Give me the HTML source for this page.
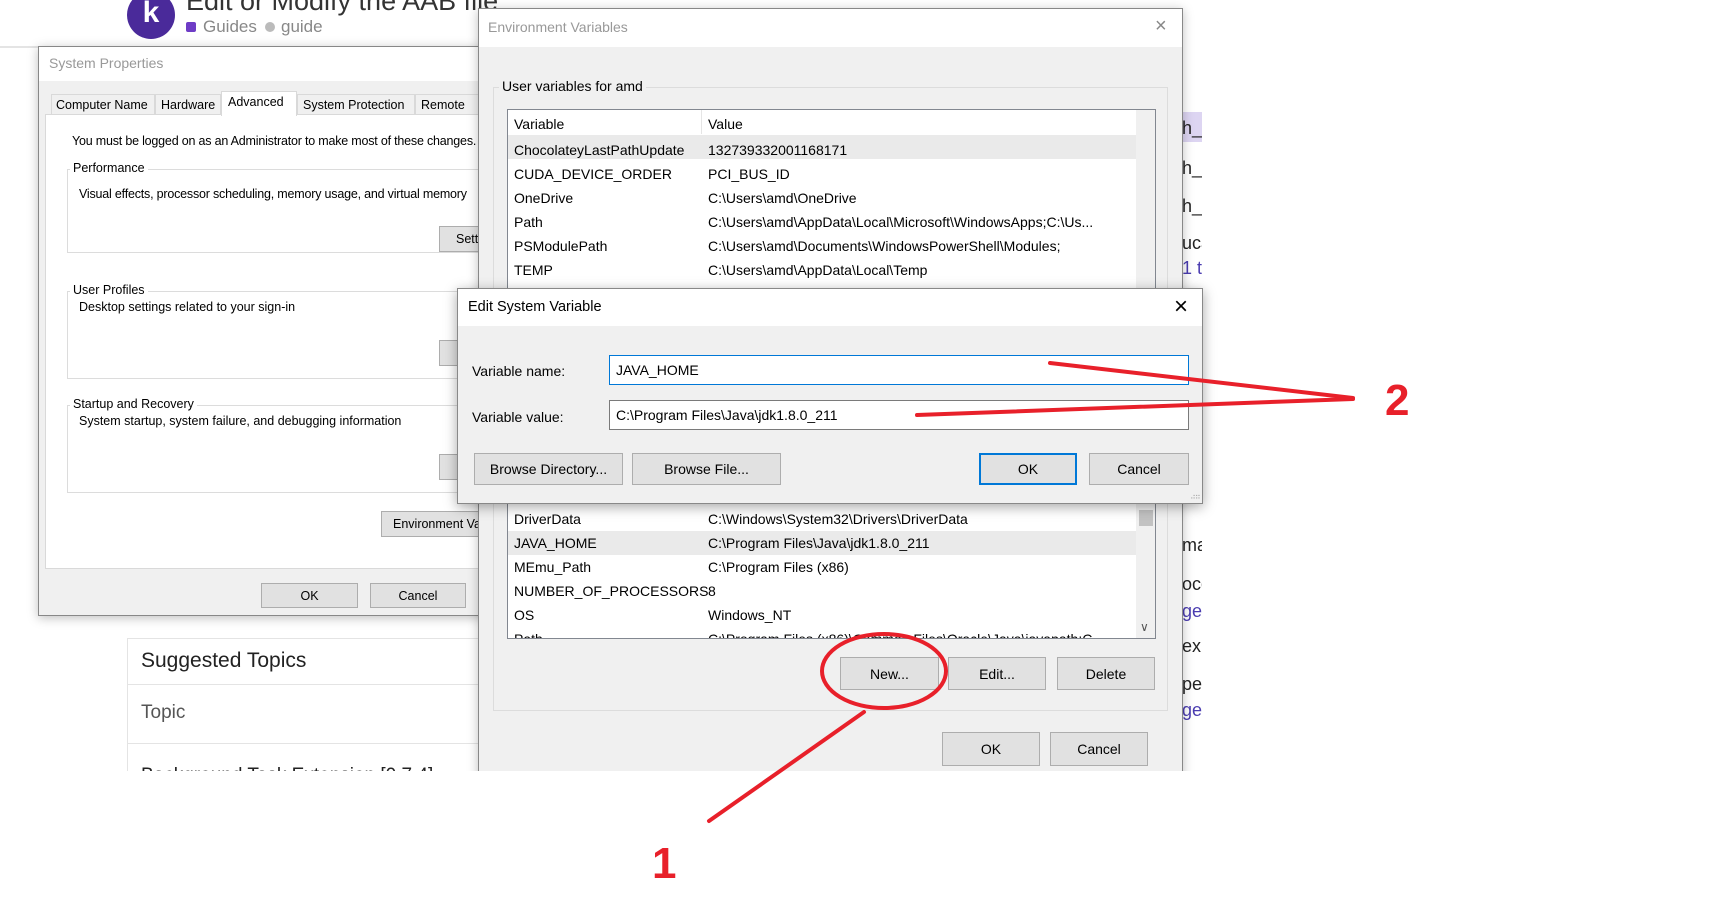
<!DOCTYPE html>
<html><head><meta charset="utf-8"><style>
*{box-sizing:border-box;margin:0;padding:0}
body{width:1715px;height:904px;background:#fff;position:relative;overflow:hidden;font-family:"Liberation Sans",sans-serif;color:#000}
.a{position:absolute;white-space:nowrap}
.btn{position:absolute;background:#e1e1e1;border:1px solid #adadad;font-size:14px;display:flex;align-items:center;justify-content:center;white-space:nowrap;overflow:hidden}
.dlg{position:absolute;background:#f0f0f0;border:1px solid #888;box-shadow:0 2px 10px rgba(0,0,0,.25)}
.tb{position:absolute;left:0;top:0;right:0;background:#fff}
.s{font-size:12.5px}
.m{font-size:14px}
.grp{position:absolute;border:1px solid #dcdcdc}
.gl{position:absolute;background:#fff;padding:0 3px;font-size:12.5px}
</style></head><body>

<div class="a" style="left:0;top:46px;width:40px;height:2px;background:#e4e4e4"></div>
<div class="a" style="left:127px;top:-9px;width:48px;height:48px;border-radius:50%;background:#4a2a9a;color:#fff;font-size:30px;font-weight:bold;text-align:center;line-height:44px">k</div>
<div class="a" style="left:186px;top:-14px;font-size:27px;color:#333">Edit or Modify the AAB file</div>
<div class="a" style="left:186px;top:22px;width:10px;height:10px;background:#6e3cc6;border-radius:2px"></div>
<div class="a" style="left:203px;top:17px;font-size:17px;color:#888">Guides</div>
<div class="a" style="left:265px;top:22px;width:10px;height:10px;background:#bbb;border-radius:50%"></div>
<div class="a" style="left:281px;top:17px;font-size:17px;color:#888">guide</div>

<div class="a" style="left:1182px;top:112px;width:20px;height:30px;background:#ddd5f2"></div>
<div class="a" style="left:1182px;top:118px;font-size:18px;color:#222">h_A</div>
<div class="a" style="left:1182px;top:158px;font-size:18px;color:#222">h_/</div>
<div class="a" style="left:1182px;top:196px;font-size:18px;color:#222">h_</div>
<div class="a" style="left:1182px;top:233px;font-size:18px;color:#222">uca</div>
<div class="a" style="left:1182px;top:258px;font-size:18px;color:#4a3cb0">1 t</div>
<div class="a" style="left:1182px;top:535px;font-size:18px;color:#222">ma</div>
<div class="a" style="left:1182px;top:574px;font-size:18px;color:#222">occ</div>
<div class="a" style="left:1182px;top:601px;font-size:18px;color:#4a3cb0">get</div>
<div class="a" style="left:1182px;top:636px;font-size:18px;color:#222">exp</div>
<div class="a" style="left:1182px;top:674px;font-size:18px;color:#222">per</div>
<div class="a" style="left:1182px;top:700px;font-size:18px;color:#4a3cb0">get</div>
<div class="a" style="left:1202px;top:0;width:520px;height:904px;background:#fff"></div>

<div class="a" style="left:127px;top:638px;width:360px;height:133px;border:1px solid #e4e4e4;border-bottom:none;overflow:hidden">
 <div class="a" style="left:13px;top:10px;font-size:21px;color:#222">Suggested Topics</div>
 <div class="a" style="left:0;top:45px;width:360px;height:1px;background:#e4e4e4"></div>
 <div class="a" style="left:13px;top:63px;font-size:19px;color:#555">Topic</div>
 <div class="a" style="left:0;top:104px;width:360px;height:1px;background:#e4e4e4"></div>
 <div class="a" style="left:13px;top:126px;font-size:19px;color:#222">Background Task Extension [0.7.4]</div>
</div>

<div class="dlg" style="left:38px;top:46px;width:450px;height:570px">
 <div class="tb" style="height:34px"><div class="a" style="left:10px;top:8px;font-size:14px;color:#999">System Properties</div></div>
 <div class="a" style="left:6px;top:67px;width:440px;height:455px;background:#fff;border:1px solid #d9d9d9"></div>
 <div class="a s" style="left:12px;top:47px;width:104px;height:21px;border:1px solid #d9d9d9;background:#f0f0f0;padding:3px 4px">Computer Name</div>
 <div class="a s" style="left:116px;top:47px;width:66px;height:21px;border:1px solid #d9d9d9;background:#f0f0f0;padding:3px 5px">Hardware</div>
 <div class="a s" style="left:182px;top:44px;width:76px;height:25px;border:1px solid #d9d9d9;border-bottom:none;background:#fff;padding:3px 6px">Advanced</div>
 <div class="a s" style="left:258px;top:47px;width:118px;height:21px;border:1px solid #d9d9d9;background:#f0f0f0;padding:3px 5px">System Protection</div>
 <div class="a s" style="left:376px;top:47px;width:80px;height:21px;border:1px solid #d9d9d9;background:#f0f0f0;padding:3px 5px">Remote</div>
 <div class="a s" style="left:33px;top:87px;letter-spacing:-0.2px">You must be logged on as an Administrator to make most of these changes.</div>
 <div class="grp" style="left:28px;top:122px;width:430px;height:84px"></div>
 <div class="gl" style="left:31px;top:114px">Performance</div>
 <div class="a s" style="left:40px;top:140px;letter-spacing:-0.2px">Visual effects, processor scheduling, memory usage, and virtual memory</div>
 <div class="btn s" style="left:400px;top:179px;width:90px;height:26px;justify-content:flex-start;padding-left:16px">Settings...</div>
 <div class="grp" style="left:28px;top:244px;width:430px;height:88px"></div>
 <div class="gl" style="left:31px;top:236px">User Profiles</div>
 <div class="a s" style="left:40px;top:253px">Desktop settings related to your sign-in</div>
 <div class="btn s" style="left:400px;top:293px;width:90px;height:26px"></div>
 <div class="grp" style="left:28px;top:358px;width:430px;height:88px"></div>
 <div class="gl" style="left:31px;top:350px">Startup and Recovery</div>
 <div class="a s" style="left:40px;top:367px">System startup, system failure, and debugging information</div>
 <div class="btn s" style="left:400px;top:407px;width:90px;height:26px"></div>
 <div class="btn s" style="left:342px;top:464px;width:110px;height:26px;justify-content:flex-start;padding-left:11px">Environment Variables...</div>
 <div class="btn s" style="left:222px;top:536px;width:97px;height:25px">OK</div>
 <div class="btn s" style="left:331px;top:536px;width:96px;height:25px">Cancel</div>
</div>

<div class="dlg" style="left:478px;top:8px;width:705px;height:800px;overflow:hidden">
 <div class="tb" style="height:38px"><div class="a" style="left:9px;top:10px;font-size:14px;color:#999">Environment Variables</div>
  <div class="a" style="left:676px;top:6px;font-size:20px;color:#888">×</div></div>
 <div class="grp" style="left:14px;top:78px;width:675px;height:624px"></div>
 <div class="a m" style="left:20px;top:69px;background:#f0f0f0;padding:0 3px">User variables for amd</div>
 <div class="a" style="left:28px;top:100px;width:649px;height:200px;background:#fff;border:1px solid #828790"></div>
 <div class="a" style="left:657px;top:101px;width:19px;height:190px;background:#f0f0f0"></div>
 <div class="a" style="left:222px;top:101px;width:1px;height:24px;background:#e5e5e5"></div>
 <div class="a m" style="left:35px;top:107px">Variable</div><div class="a m" style="left:229px;top:107px">Value</div>
 <div class="a" style="left:29px;top:126px;width:628px;height:24px;background:#eaeaea"></div>
 <div class="a m" style="left:35px;top:129px;line-height:24px">ChocolateyLastPathUpdate<br>CUDA_DEVICE_ORDER<br>OneDrive<br>Path<br>PSModulePath<br>TEMP<br>TMP</div>
 <div class="a m" style="left:229px;top:129px;line-height:24px">132739332001168171<br>PCI_BUS_ID<br>C:\Users\amd\OneDrive<br>C:\Users\amd\AppData\Local\Microsoft\WindowsApps;C:\Us...<br>C:\Users\amd\Documents\WindowsPowerShell\Modules;<br>C:\Users\amd\AppData\Local\Temp<br>C:\Users\amd\AppData\Local\Temp</div>

 <div class="a" style="left:28px;top:440px;width:649px;height:190px;background:#fff;border:1px solid #828790;overflow:hidden">
  <div class="a" style="left:0;top:81px;width:628px;height:24px;background:#eaeaea"></div>
  <div class="a m" style="left:6px;top:57px;line-height:24px">DriverData<br>JAVA_HOME<br>MEmu_Path<br>NUMBER_OF_PROCESSORS<br>OS<br>Path</div>
  <div class="a m" style="left:200px;top:57px;line-height:24px">C:\Windows\System32\Drivers\DriverData<br>C:\Program Files\Java\jdk1.8.0_211<br>C:\Program Files (x86)<br>8<br>Windows_NT<br>C:\Program Files (x86)\Common Files\Oracle\Java\javapath;C...</div>
  <div class="a" style="left:628px;top:0;width:20px;height:190px;background:#f0f0f0"></div>
  <div class="a" style="left:631px;top:60px;width:14px;height:16px;background:#c2c2c2"></div>
  <div class="a" style="left:632px;top:170px;font-size:12px;color:#555">∨</div>
 </div>
 <div class="btn" style="left:361px;top:648px;width:99px;height:33px">New...</div>
 <div class="btn" style="left:469px;top:648px;width:98px;height:33px">Edit...</div>
 <div class="btn" style="left:578px;top:648px;width:98px;height:33px">Delete</div>
 <div class="btn" style="left:463px;top:723px;width:98px;height:34px">OK</div>
 <div class="btn" style="left:571px;top:723px;width:98px;height:34px">Cancel</div>
</div>
<div class="a" style="left:0;top:771px;width:1715px;height:133px;background:#fff"></div>

<div class="dlg" style="left:457px;top:288px;width:746px;height:216px;box-shadow:0 3px 12px rgba(0,0,0,.35)">
 <div class="tb" style="height:37px"><div class="a" style="left:10px;top:10px;font-size:14.5px">Edit System Variable</div>
  <div class="a" style="left:716px;top:4px;font-size:24px;font-weight:300">×</div></div>
 <div class="a m" style="left:14px;top:74px">Variable name:</div>
 <div class="a m" style="left:14px;top:120px">Variable value:</div>
 <div class="a m" style="left:151px;top:66px;width:580px;height:30px;background:#fff;border:1px solid #0078d7;padding:6px 6px">JAVA_HOME</div>
 <div class="a m" style="left:151px;top:111px;width:580px;height:30px;background:#fff;border:1px solid #7a7a7a;padding:6px 6px">C:\Program Files\Java\jdk1.8.0_211</div>
 <div class="btn" style="left:16px;top:164px;width:149px;height:32px">Browse Directory...</div>
 <div class="btn" style="left:174px;top:164px;width:149px;height:32px">Browse File...</div>
 <div class="btn" style="left:521px;top:164px;width:98px;height:32px;border:2px solid #0078d7">OK</div>
 <div class="btn" style="left:631px;top:164px;width:100px;height:32px">Cancel</div>
 <div class="a" style="left:732px;top:203px;font-size:8px;color:#aaa;letter-spacing:-1px">⠴⠶</div>
</div>

<svg class="a" style="left:0;top:0" width="1715" height="904">
 <g stroke="#e8202a" stroke-width="4" fill="none" stroke-linecap="round">
  <path d="M1050 363 L1353 398"/>
  <path d="M917 415 L1353 399"/>
  <ellipse cx="884" cy="671" rx="62" ry="37"/>
  <path d="M864 712 L709 821"/>
 </g>
 <text x="1385" y="415" font-family="Liberation Sans" font-weight="bold" font-size="44" fill="#e8202a">2</text>
 <text x="652" y="878" font-family="Liberation Sans" font-weight="bold" font-size="44" fill="#e8202a">1</text>
</svg>
</body></html>
